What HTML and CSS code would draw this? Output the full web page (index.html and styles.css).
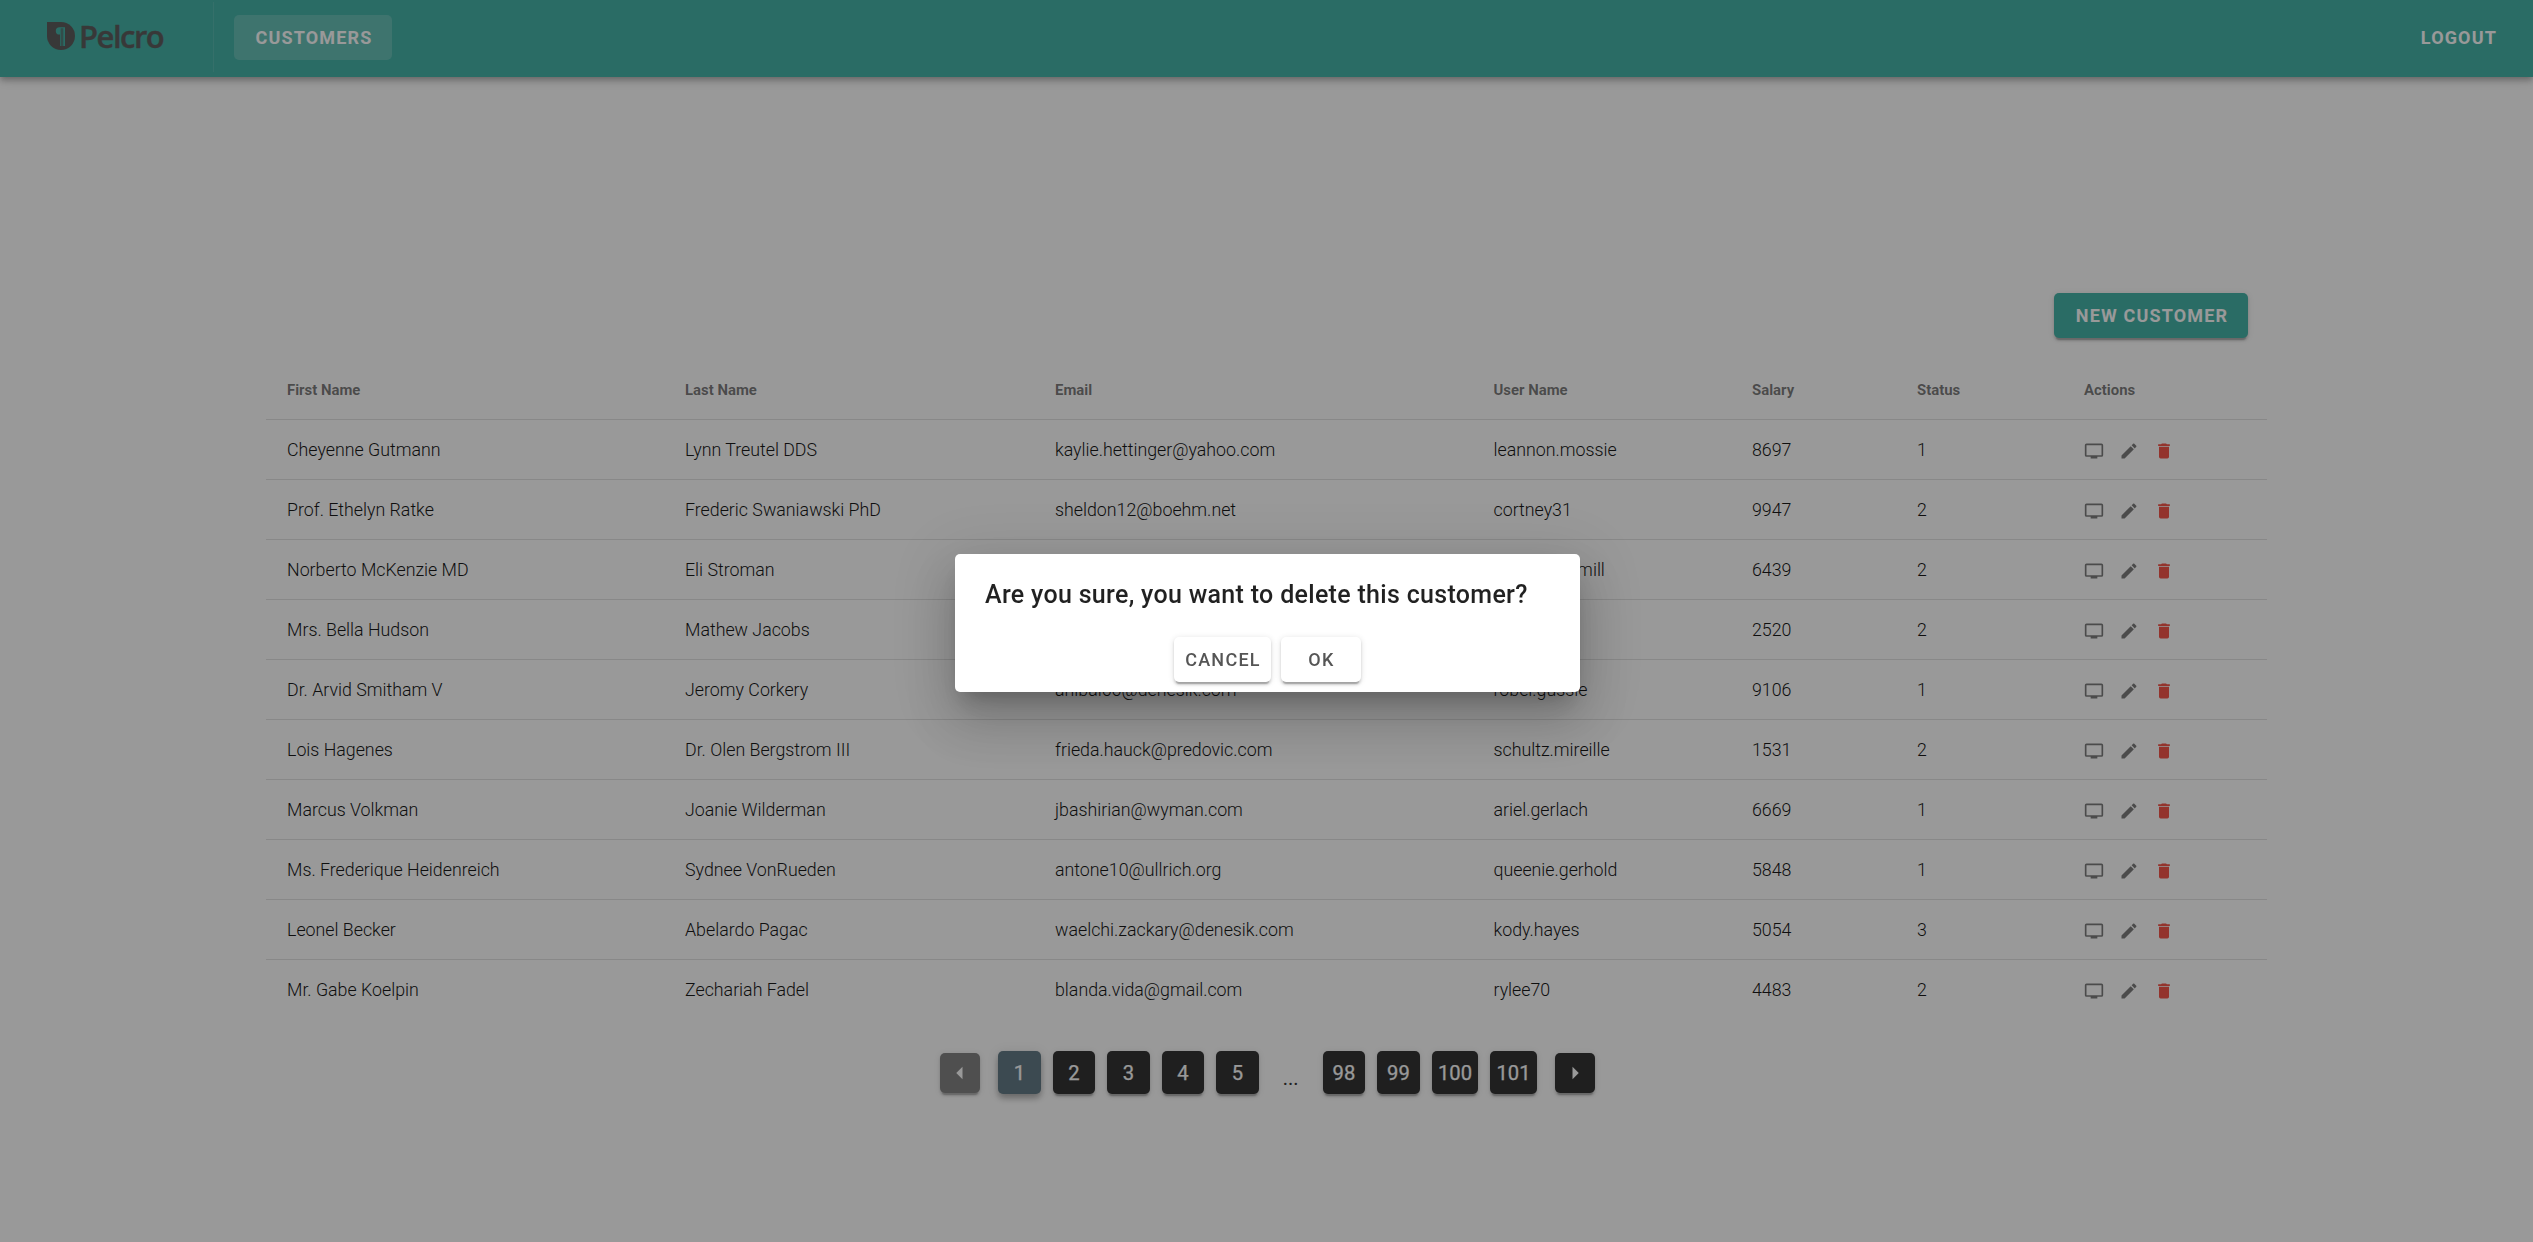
FILE: index.html
```html
<!DOCTYPE html>
<html lang="en">
<head>
<meta charset="utf-8">
<title>Pelcro Customers</title>
<link rel="stylesheet" href="styles.css">
</head>
<body>
<svg class="sprite" aria-hidden="true">
  <symbol id="tv" viewBox="0 0 24 24"><path d="M21,17H3V5H21M21,3H3A2,2 0 0,0 1,5V17A2,2 0 0,0 3,19H8V21H16V19H21A2,2 0 0,0 23,17V5A2,2 0 0,0 21,3Z"/></symbol>
  <symbol id="pencil" viewBox="0 0 24 24"><path d="M20.71,7.04C21.1,6.65 21.1,6 20.71,5.63L18.37,3.29C18,2.9 17.35,2.9 16.96,3.29L15.12,5.12L18.87,8.87M3,17.25V21H6.75L17.81,9.93L14.06,6.18L3,17.25Z"/></symbol>
  <symbol id="trash" viewBox="0 0 24 24"><path d="M19,4H15.5L14.5,3H9.5L8.5,4H5V6H19M6,19A2,2 0 0,0 8,21H16A2,2 0 0,0 18,19V7H6V19Z"/></symbol>
</svg>
<header class="bar">
  <div class="logo">
    <svg class="mark" viewBox="0 0 28 28"><path d="M0 0H14A14 14 0 1 1 0 14Z"/><path class="cut" d="M18 5.2H12.5A3.7 3.7 0 0 0 12.5 12.6H13V24H13.8V6.2H14.6V24H15.4V6.2H16.2V24H18Z"/></svg>
    <span class="word">Pelcro</span>
  </div>
  <div class="divider"></div>
  <a class="btn nav-active">CUSTOMERS</a>
  <a class="btn logout">LOGOUT</a>
</header>
<main class="page">
  <div class="tools"><button class="btn primary">NEW CUSTOMER</button></div>
  <table class="grid">
    <colgroup><col class="c1"><col class="c2"><col class="c3"><col class="c4"><col class="c5"><col class="c6"><col class="c7"></colgroup>
    <thead><tr><th>First Name</th><th>Last Name</th><th>Email</th><th>User Name</th><th>Salary</th><th>Status</th><th>Actions</th></tr></thead>
    <tbody>
      <tr><td>Cheyenne Gutmann</td><td>Lynn Treutel DDS</td><td>kaylie.hettinger@yahoo.com</td><td>leannon.mossie</td><td>8697</td><td>1</td><td><div class="acts"><svg><use href="#tv"/></svg><svg><use href="#pencil"/></svg><svg class="del"><use href="#trash"/></svg></div></td></tr>
      <tr><td>Prof. Ethelyn Ratke</td><td>Frederic Swaniawski PhD</td><td>sheldon12@boehm.net</td><td>cortney31</td><td>9947</td><td>2</td><td><div class="acts"><svg><use href="#tv"/></svg><svg><use href="#pencil"/></svg><svg class="del"><use href="#trash"/></svg></div></td></tr>
      <tr><td>Norberto McKenzie MD</td><td>Eli Stroman</td><td>wolff.amely@yahoo.com</td><td>bernard.hamill</td><td>6439</td><td>2</td><td><div class="acts"><svg><use href="#tv"/></svg><svg><use href="#pencil"/></svg><svg class="del"><use href="#trash"/></svg></div></td></tr>
      <tr><td>Mrs. Bella Hudson</td><td>Mathew Jacobs</td><td>bhudson@gmail.com</td><td>mjacobs</td><td>2520</td><td>2</td><td><div class="acts"><svg><use href="#tv"/></svg><svg><use href="#pencil"/></svg><svg class="del"><use href="#trash"/></svg></div></td></tr>
      <tr><td>Dr. Arvid Smitham V</td><td>Jeromy Corkery</td><td>anibal66@denesik.com</td><td>robel.gussie</td><td>9106</td><td>1</td><td><div class="acts"><svg><use href="#tv"/></svg><svg><use href="#pencil"/></svg><svg class="del"><use href="#trash"/></svg></div></td></tr>
      <tr><td>Lois Hagenes</td><td>Dr. Olen Bergstrom III</td><td>frieda.hauck@predovic.com</td><td>schultz.mireille</td><td>1531</td><td>2</td><td><div class="acts"><svg><use href="#tv"/></svg><svg><use href="#pencil"/></svg><svg class="del"><use href="#trash"/></svg></div></td></tr>
      <tr><td>Marcus Volkman</td><td>Joanie Wilderman</td><td>jbashirian@wyman.com</td><td>ariel.gerlach</td><td>6669</td><td>1</td><td><div class="acts"><svg><use href="#tv"/></svg><svg><use href="#pencil"/></svg><svg class="del"><use href="#trash"/></svg></div></td></tr>
      <tr><td>Ms. Frederique Heidenreich</td><td>Sydnee VonRueden</td><td>antone10@ullrich.org</td><td>queenie.gerhold</td><td>5848</td><td>1</td><td><div class="acts"><svg><use href="#tv"/></svg><svg><use href="#pencil"/></svg><svg class="del"><use href="#trash"/></svg></div></td></tr>
      <tr><td>Leonel Becker</td><td>Abelardo Pagac</td><td>waelchi.zackary@denesik.com</td><td>kody.hayes</td><td>5054</td><td>3</td><td><div class="acts"><svg><use href="#tv"/></svg><svg><use href="#pencil"/></svg><svg class="del"><use href="#trash"/></svg></div></td></tr>
      <tr><td>Mr. Gabe Koelpin</td><td>Zechariah Fadel</td><td>blanda.vida@gmail.com</td><td>rylee70</td><td>4483</td><td>2</td><td><div class="acts"><svg><use href="#tv"/></svg><svg><use href="#pencil"/></svg><svg class="del"><use href="#trash"/></svg></div></td></tr>
    </tbody>
  </table>
  <nav class="pager">
    <span class="step off"><svg viewBox="0 0 24 24"><path d="M14,7L9,12L14,17V7Z"/></svg></span>
    <span class="item current">1</span><span class="item">2</span><span class="item">3</span><span class="item">4</span><span class="item">5</span>
    <span class="more">...</span>
    <span class="item">98</span><span class="item">99</span><span class="item">100</span><span class="item">101</span>
    <span class="step"><svg viewBox="0 0 24 24"><path d="M10,17L15,12L10,7V17Z"/></svg></span>
  </nav>
</main>
<div class="scrim">
  <section class="dialog" role="dialog">
    <h2>Are you sure, you want to delete this customer?</h2>
    <div class="choices"><button class="btn plain cancel">CANCEL</button><button class="btn plain ok">OK</button></div>
  </section>
</div>
</body>
</html>
```
FILE: styles.css
```css
* { box-sizing: border-box; }
body { margin: 0; height: 1242px; overflow: hidden; background: #fff; color: rgba(0,0,0,.87); font-family: Roboto, "Liberation Sans", sans-serif; font-size: 17.5px; }
.sprite { display: none; }
.bar { position: relative; display: flex; align-items: flex-start; height: 77px; padding: 15px 17px 0 47px; background: #32ac9f; box-shadow: 0 2.5px 5px -1px rgba(0,0,0,.2), 0 5px 6px rgba(0,0,0,.14), 0 1px 12.5px rgba(0,0,0,.12); }
.logo { display: flex; gap: 4px; width: 166px; padding-top: 7px; color: #4d4d4d; }
.mark { width: 28px; height: 28px; fill: #4d4d4d; }
.mark .cut { fill: #32ac9f; }
.word { font: 600 31px/28px "Open Sans", sans-serif; letter-spacing: -1.5px; -webkit-text-stroke: .4px #4d4d4d; }
.divider { width: 1px; height: 70px; margin: -13px 20px 0 0; background: rgba(255,255,255,.1); }
.btn { display: flex; align-items: center; justify-content: center; height: 45px; padding: 0 19px 0 21px; border: 0; border-radius: 5px; font: 700 18px Roboto, sans-serif; letter-spacing: 1.15px; color: #fff; white-space: nowrap; }
.nav-active { width: 158px; background: rgba(255,255,255,.18); }
.logout { margin-left: auto; }
.page { display: flex; flex-direction: column; width: 2001px; margin: 0 auto; padding-top: 216px; }
.tools { display: flex; justify-content: flex-end; height: 67px; padding-right: 19px; }
.primary { width: 194px; background: #32ac9f; }
.primary, .plain, .item, .step { box-shadow: 0 4px 1px -2px rgba(0,0,0,.2), 0 2.5px 2.5px rgba(0,0,0,.14), 0 1px 6px rgba(0,0,0,.12); }
.grid { width: 2001px; border-collapse: separate; border-spacing: 0; table-layout: fixed; }
.c1 { width: 398px; } .c2 { width: 370px; } .c3 { width: 438.5px; } .c4 { width: 258.5px; } .c5 { width: 165px; } .c6 { width: 167px; } .c7 { width: 204px; }
.grid th, .grid td { height: 60px; padding: 0 20px 0 21px; border-bottom: 1px solid rgba(0,0,0,.12); text-align: left; vertical-align: middle; white-space: nowrap; }
.grid th { font-size: 14.9px; font-weight: 700; color: rgba(0,0,0,.58); }
.grid td { font-size: 17.8px; font-weight: 300; color: #000; }
.grid tbody tr:last-child td { height: 59px; border-bottom: 0; }
.acts { display: flex; gap: 15px; padding-top: 2px; }
.acts svg { width: 20px; height: 20px; fill: rgba(0,0,0,.56); }
.acts .del { fill: #f44336; }
.pager { display: flex; align-items: center; justify-content: center; margin-top: 26px; padding-left: 2px; color: #fff; }
.item { display: flex; align-items: center; justify-content: center; min-width: 42.5px; height: 42.5px; margin: 6px; padding: 1px 6.25px 0; border-radius: 5px; background: #1f1f1f; font-size: 20.2px; -webkit-text-stroke: .25px #fff; }
.current { background: #546e7a; box-shadow: 0 4px 6px -1px rgba(0,0,0,.2), 0 5px 6px rgba(0,0,0,.14), 0 1px 12px rgba(0,0,0,.12); }
.step { display: flex; align-items: center; justify-content: center; width: 40px; height: 40px; margin: 7px 12.5px 6px; border-radius: 5px; background: #1f1f1f; }
.step svg { width: 30px; height: 30px; fill: #fff; }
.off { background: #777; }
.more { display: flex; align-items: flex-end; justify-content: center; width: 40px; height: 40px; margin: 4px 6px 8px; color: #222; font-size: 20px; }
.scrim { position: fixed; inset: 0; display: flex; align-items: flex-start; justify-content: center; padding-top: 554px; background: rgba(33,33,33,.46); }
.dialog { width: 625px; height: 138px; margin-left: 2px; padding: 21px 30px 10px; border-radius: 5px; background: #fff; box-shadow: 0 14px 19px -9px rgba(0,0,0,.2), 0 30px 47px 4px rgba(0,0,0,.14), 0 11px 57px 10px rgba(0,0,0,.12); }
.dialog h2 { margin: 0 0 22px; font-size: 25px; line-height: 40px; font-weight: 500; letter-spacing: .0125em; white-space: nowrap; color: rgba(0,0,0,.87); }
.choices { display: flex; justify-content: center; gap: 10px; }
.plain { padding: 0 0 0 1px; background: #fff; color: #555; font-weight: 500; letter-spacing: 1.25px; }
.cancel { width: 97px; } .ok { width: 80px; }
```
